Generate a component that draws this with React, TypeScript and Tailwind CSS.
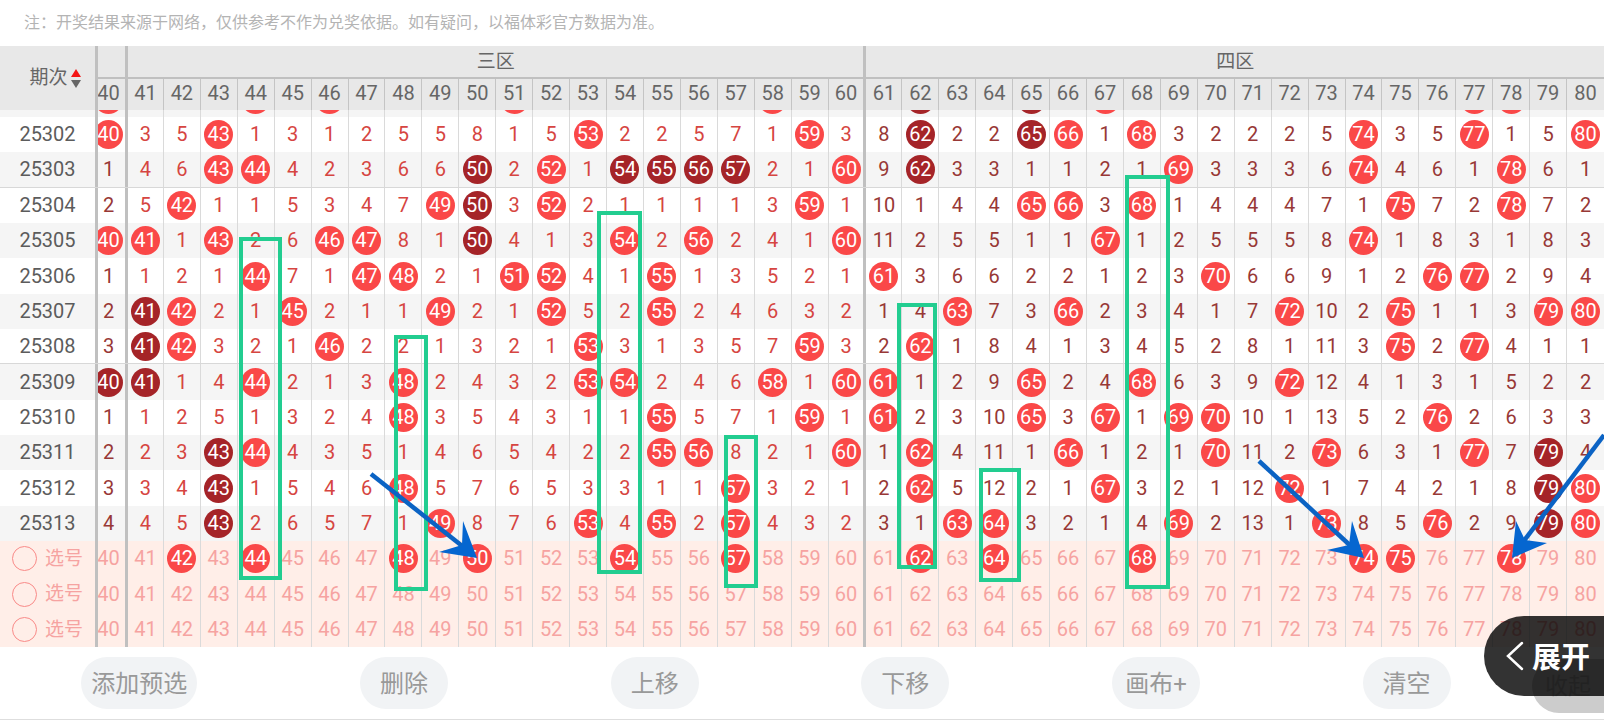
import { Fragment, useState } from 'react'
import clsx from 'clsx'

// Columns shown in the viewport; 40 is the tail of the second zone
const COLUMNS = Array.from({ length: 41 }, (_, i) => 40 + i)

// One entry per column: a number is the miss count, "o" a hit, "O" a repeated hit
const DRAWS = [
  { id: '25302', cells: 'o 3 5 o 1 3 1 2 5 5 8 1 5 o 2 2 5 7 1 o 3 8 O 2 2 O o 1 o 3 2 2 2 5 o 3 5 o 1 5 o' },
  { id: '25303', cells: '1 4 6 o o 4 2 3 6 6 O 2 o 1 O O O O 2 1 o 9 O 3 3 1 1 2 1 o 3 3 3 6 o 4 6 1 o 6 1' },
  { id: '25304', cells: '2 5 o 1 1 5 3 4 7 o O 3 o 2 1 1 1 1 3 o 1 10 1 4 4 o o 3 o 1 4 4 4 7 1 o 7 2 o 7 2' },
  { id: '25305', cells: 'o o 1 o 2 6 o o 8 1 O 4 1 3 o 2 o 2 4 1 o 11 2 5 5 1 1 o 1 2 5 5 5 8 o 1 8 3 1 8 3' },
  { id: '25306', cells: '1 1 2 1 o 7 1 o o 2 1 o o 4 1 o 1 3 5 2 1 o 3 6 6 2 2 1 2 3 o 6 6 9 1 2 o o 2 9 4' },
  { id: '25307', cells: '2 O o 2 1 o 2 1 1 o 2 1 o 5 2 o 2 4 6 3 2 1 4 o 7 3 o 2 3 4 1 7 o 10 2 o 1 1 3 o o' },
  { id: '25308', cells: '3 O o 3 2 1 o 2 2 1 3 2 1 o 3 1 3 5 7 o 3 2 o 1 8 4 1 3 4 5 2 8 1 11 3 o 2 o 4 1 1' },
  { id: '25309', cells: 'O O 1 4 o 2 1 3 o 2 4 3 2 o o 2 4 6 o 1 o o 1 2 9 o 2 4 o 6 3 9 o 12 4 1 3 1 5 2 2' },
  { id: '25310', cells: '1 1 2 5 1 3 2 4 o 3 5 4 3 1 1 o 5 7 1 o 1 o 2 3 10 o 3 o 1 o o 10 1 13 5 2 o 2 6 3 3' },
  { id: '25311', cells: '2 2 3 O o 4 3 5 1 4 6 5 4 2 2 o o 8 2 1 o 1 o 4 11 1 o 1 2 1 o 11 2 o 6 3 1 o 7 O 4' },
  { id: '25312', cells: '3 3 4 O 1 5 4 6 o 5 7 6 5 3 3 1 1 o 3 2 1 2 o 5 12 2 1 o 3 2 1 12 o 1 7 4 2 1 8 O o' },
  { id: '25313', cells: '4 4 5 O 2 6 5 7 1 o 8 7 6 o 4 o 2 o 4 3 2 3 1 o o 3 2 1 4 o 2 13 1 o 8 5 o 2 9 O o' },
]

// Row scrolled under the header
const HIDDEN_HITS: Record<number, string> = {
  40: 'o', 44: 'o', 46: 'o', 51: 'o', 58: 'o', 62: 'O', 65: 'O', 67: 'o', 77: 'o', 78: 'o',
}

const INITIAL_PICKS = [[42, 44, 48, 50, 54, 57, 62, 64, 68, 74, 75, 78], [], []]

// Rectangles drawn by the user, in chart coordinates
const BOXES = [
  { x: 241, y: 193, w: 39, h: 339 },
  { x: 396, y: 291, w: 30, h: 252 },
  { x: 599, y: 167, w: 41, h: 359 },
  { x: 726, y: 391, w: 30, h: 149 },
  { x: 899, y: 259, w: 36, h: 262 },
  { x: 981, y: 424, w: 38, h: 110 },
  { x: 1127, y: 131, w: 41, h: 410 },
]

const ARROWS = [
  { line: 'M371 428 L466 503', head: 'M477 512 L463 475 L462 499 L439 506 Z' },
  { line: 'M1259 415 L1354 503', head: 'M1364 512 L1352 475 L1349 499 L1327 504 Z' },
  { line: 'M1604 389 L1520 500', head: 'M1512 512 L1516 475 L1525 494 L1547 497 Z' },
]

const ROW = 'grid grid-cols-[98px_29px_repeat(40,minmax(0,1fr))]'

function cellBorder(n: number, thin: string) {
  if (n === 40) return 'border-r-2 border-[#c0c0c0] justify-end pr-[2px] overflow-hidden'
  if (n === 60) return 'border-r-2 border-[#c0c0c0] justify-center'
  if (n === 80) return 'justify-center'
  return clsx('border-r justify-center', thin, (n === 41 || n === 61) && 'border-l border-l-[#c0c0c0]')
}

function Ball({ n, dark }: { n?: number; dark?: boolean }) {
  return (
    <span
      className={clsx(
        'flex size-[29px] shrink-0 items-center justify-center rounded-full pb-[1px] text-white',
        dark ? 'bg-[#a52428]' : 'bg-[#fa4848]'
      )}
    >
      {n}
    </span>
  )
}

function ChartHeader() {
  return (
    <thead className={clsx(ROW, 'bg-[#e8e8e8] text-[#666]')}>
      <tr className="contents">
        <th rowSpan={2} className="row-span-2 flex items-center justify-center border-r-3 border-[#c0c0c0] pl-[15px] font-normal">
          <button type="button" className="flex items-center gap-[3px] text-[19px]">
            期次
            <svg width="10" height="20" viewBox="0 0 10 20" aria-hidden="true">
              <path d="M5 1 L10 9 H0 Z" fill="#f41616" />
              <path d="M5 20 L0 12 H10 Z" fill="#666" />
            </svg>
          </button>
        </th>
        <th className="h-[33px] border-r-2 border-b-2 border-[#c0c0c0]" />
        <th colSpan={20} className="col-span-20 h-[33px] border-x-2 border-b-2 border-l border-[#c0c0c0] text-[19px] leading-[31px] font-normal">
          三区
        </th>
        <th colSpan={20} className="col-span-20 h-[33px] border-b-2 border-l border-[#c0c0c0] text-[19px] leading-[31px] font-normal">
          四区
        </th>
      </tr>
      <tr className="contents">
        {COLUMNS.map((n) => (
          <th key={n} className={clsx('flex h-[31px] items-center pb-[3px] font-normal', cellBorder(n, 'border-[#c4c4c4]'))}>
            <span className="w-[29px] shrink-0 text-center">{n}</span>
          </th>
        ))}
      </tr>
    </thead>
  )
}

function DrawRow({ id, cells, index }: { id: string; cells: string; index: number }) {
  const values = cells.split(' ')
  return (
    <tr
      className={clsx(
        ROW,
        'h-[35px] nth-[3n]:h-[36px]',
        index % 2 ? 'bg-[#f5f5f5]' : 'bg-white',
        (index === 1 || index === 6) && 'border-b border-[#d8d8d8]'
      )}
    >
      <th className="flex items-center justify-center border-r-3 border-[#c0c0c0] pb-[1px] font-normal text-[#5c5c5c]">{id}</th>
      {COLUMNS.map((n, i) => {
        const value = values[i]
        const hit = value === 'o' || value === 'O'
        return (
          <td
            key={n}
            className={clsx(
              'flex items-center',
              n > 40 && n <= 60 ? 'text-[#d64541]' : 'text-[#983836]',
              cellBorder(n, 'border-[#dadada]')
            )}
          >
            {hit ? (
              <Ball n={n} dark={value === 'O'} />
            ) : (
              <span className="w-[29px] shrink-0 pb-[1px] text-center">{value}</span>
            )}
          </td>
        )
      })}
    </tr>
  )
}

function PickRow({ index, picks, onToggle }: { index: number; picks: number[]; onToggle: (n: number) => void }) {
  return (
    <tr className={clsx(ROW, 'h-[35px] bg-[#ffeee8] text-[#f6a3a1] nth-[3n]:h-[36px]')}>
      <th className="border-r-3 border-[#c0c0c0] font-normal">
        <label className="flex h-full items-center gap-2 pl-3 text-[19px]">
          <input
            type="radio"
            name="pick-row"
            value={index}
            className="size-[25px] appearance-none rounded-full border border-[#f98a88] checked:bg-[#fa4848]"
          />
          选号
        </label>
      </th>
      {COLUMNS.map((n) => (
        <td key={n} className={clsx('flex items-center', cellBorder(n, 'border-[#dadada]'))}>
          <button
            type="button"
            onClick={() => onToggle(n)}
            className={clsx('w-[29px] shrink-0 text-center', !picks.includes(n) && 'pb-[1px]')}
          >
            {picks.includes(n) ? <Ball n={n} /> : n}
          </button>
        </td>
      ))}
    </tr>
  )
}

function Annotations() {
  return (
    <svg
      className="pointer-events-none absolute inset-0 size-full"
      viewBox="0 0 1604 601"
      preserveAspectRatio="none"
      fill="none"
      aria-hidden="true"
    >
      {BOXES.map((b) => (
        <rect key={b.x} x={b.x} y={b.y} width={b.w} height={b.h} stroke="#22cd90" strokeWidth="4" />
      ))}
      {ARROWS.map((a) => (
        <Fragment key={a.line}>
          <path d={a.line} stroke="#0b63c4" strokeWidth="4.5" />
          <path d={a.head} fill="#0566d0" />
        </Fragment>
      ))}
    </svg>
  )
}

export default function App() {
  const [picks, setPicks] = useState<number[][]>(INITIAL_PICKS)

  const toggle = (row: number, n: number) =>
    setPicks((prev) =>
      prev.map((p, i) => (i !== row ? p : p.includes(n) ? p.filter((v) => v !== n) : [...p, n]))
    )

  return (
    <div className="relative overflow-hidden bg-white font-[Roboto,'Noto_Sans_CJK_SC',sans-serif]">
      <p className="flex h-[46px] items-center pl-6 text-base text-[#b4b4b4]">
        注：开奖结果来源于网络，仅供参考不作为兑奖依据。如有疑问，以福体彩官方数据为准。
      </p>

      {/* Trend chart */}
      <div className="relative">
        <table className="block text-[20px] leading-6">
          <ChartHeader />
          <tbody className="block">
            <tr className={clsx(ROW, 'h-[7px] bg-[#f5f5f5]')}>
              <th className="border-r-3 border-[#c0c0c0]" />
              {COLUMNS.map((n) => (
                <td key={n} className={clsx('flex h-[7px] items-end overflow-hidden pb-[3px]', cellBorder(n, 'border-[#dadada]'))}>
                  {HIDDEN_HITS[n] && <Ball dark={HIDDEN_HITS[n] === 'O'} />}
                </td>
              ))}
            </tr>
            {DRAWS.map((d, i) => (
              <DrawRow key={d.id} id={d.id} cells={d.cells} index={i} />
            ))}
            {picks.map((p, i) => (
              <PickRow key={i} index={i} picks={p} onToggle={(n) => toggle(i, n)} />
            ))}
          </tbody>
        </table>
        <Annotations />
      </div>

      {/* Toolbar */}
      <div className="flex h-[73px] items-center border-b border-[#dedede] text-[24px] text-[#999]">
        <div className="flex flex-1 items-center justify-around">
          {['添加预选', '删除', '上移', '下移', '画布+', '清空'].map((label) => (
            <button key={label} type="button" className="h-[52px] min-w-[88px] rounded-full bg-[#f1f3f5] px-[10px] pt-[2px]">
              {label}
            </button>
          ))}
        </div>
        <button type="button" className="mb-[6px] h-[54px] w-[72px] self-end rounded-l-full bg-[#ccc] pt-[2px] text-[23px] text-[#aaa]">
          收起
        </button>
      </div>

      {/* Floating expand handle */}
      <button
        type="button"
        className="absolute right-0 bottom-6 flex h-20 w-[120px] items-center justify-end gap-2 rounded-l-full bg-black/80 pr-[14px] text-[29px] font-bold text-white"
      >
        <svg width="18" height="30" viewBox="0 0 18 30" fill="none" stroke="currentColor" strokeWidth="2.5" strokeLinecap="round" aria-hidden="true">
          <path d="M16 2 L2 15 L16 28" />
        </svg>
        <span className="pt-[6px]">展开</span>
      </button>
    </div>
  )
}
